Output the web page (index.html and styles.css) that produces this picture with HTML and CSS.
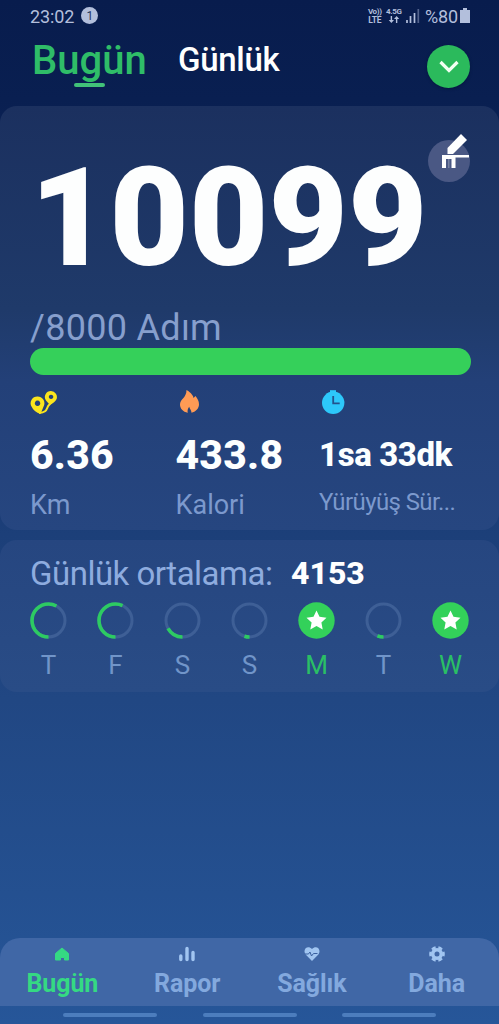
FILE: index.html
```html
<!DOCTYPE html>
<html lang="tr">
<head>
<meta charset="utf-8">
<title>Adım Sayar</title>
<link rel="stylesheet" href="styles.css">
</head>
<body>
<div class="screen">
  <div class="status">
    <span class="time">23:02</span><span class="badge">1</span>
    <span class="net volte"><span>Vo))</span><span class="lte">LTE</span></span>
    <span class="net data"><span>4.5G</span><svg width="12" height="7" viewBox="0 0 12 8"><path d="M2.200 0h1.600v4.500H6L3 8 0 4.500h2.200zM8.200 8h1.600V3.500H12L9 0 6 3.500h2.200z" fill="#b3bfdc"/></svg></span>
    <svg class="signal" width="14" height="14" viewBox="0 0 14 14"><path d="M1 11v3M4.500 7v7M8.500 4v10" stroke="#b3bfdc" stroke-width="1.700"/><path d="M12.300 0v14" stroke="#53638d" stroke-width="1.700"/></svg>
    <span class="battery-text">%80</span>
    <svg class="battery" width="10" height="15" viewBox="0 0 10 15"><path d="M3 0h4v2h3v13H0V2h3z" fill="#b3bfdc"/></svg>
  </div>
  <header class="tabs">
    <span class="tab tab-active">Bugün</span>
    <span class="tab tab-idle">Günlük</span>
    <span class="drop"><svg width="20" height="14" viewBox="0 0 20 14"><path d="M1.500 2l8.500 8.500L18.500 2" fill="none" stroke="#f2fff2" stroke-width="3.200"/></svg></span>
  </header>

  <section class="card summary">
    <div class="steps">10099</div>
    <svg class="pencil" width="44" height="50" viewBox="0 0 44 50"><circle cx="22" cy="29" r="21" fill="#4a5884"/><path d="M34 2l6 6L26 22h-5.500v-6z" fill="#fff"/><path d="M15 23h27v2.500H28.500V36h-4V27H19v9h-4z" fill="#fff"/><path d="M21 27h1.500v9H21z" fill="#fff" opacity=".25"/></svg>
    <div class="goal">/8000 Adım</div>
    <div class="progress"></div>
    <div class="stats">
      <div class="stat">
        <svg width="28" height="25" viewBox="0 0 28 25"><path d="M9 23c9-.5 7-5 10-8l3-3" fill="none" stroke="#fbe51d" stroke-width="2"/><path fill-rule="evenodd" d="M7.500 6.500a6.700 6.700 0 0 1 6.300 9.500L10.500 24Q4 22 1.500 16.500A6.700 6.700 0 0 1 7.500 6.500zm0 4.100a2.700 2.700 0 1 0 .1 0zM21 1a6 6 0 0 1 5.500 8.200Q24.500 13 19.500 14.500l-3.500-4A6 6 0 0 1 21 1zm0 3.700a2.200 2.200 0 1 0 .1 0z" fill="#fbe51d"/></svg>
        <b class="value">6.36</b><span class="label">Km</span>
      </div>
      <div class="stat">
        <svg width="28" height="25" viewBox="0 0 28 25"><path d="M10.500 0c5 3 7 6 7 8l2-2c2 3 3.500 5 3.500 8.500 0 4-3.500 7.500-7.500 8.200 0-2.500-2-4-2.300-6-1.500 1.800-2 4-1.400 6C7 22 4 18.500 4 14.500 4 9 10.500 8 10.500 0z" fill="#ff9b55"/></svg>
        <b class="value value-cal">433.8</b><span class="label label-cal">Kalori</span>
      </div>
      <div class="stat">
        <svg width="28" height="25" viewBox="0 0 28 25"><path d="M11 .2h6v3h-6z" fill="#2dc8fa"/><circle cx="14.200" cy="12.800" r="11.200" fill="#2dc8fa"/><path d="M14.200 6v7.300h6.500" fill="none" stroke="#23538c" stroke-width="1.800"/></svg>
        <b class="value value-time">1sa 33dk</b><span class="label label-time">Yürüyüş Sür...</span>
      </div>
    </div>
  </section>

  <section class="card week">
    <div class="average"><span class="avg-label">Günlük ortalama:</span><b class="avg-value">4153</b></div>
    <div class="days">
      <div class="day"><svg class="ring" viewBox="0 0 37 37"><circle class="track" cx="18.500" cy="18.500" r="16.500"/><circle class="arc" pathLength="100" stroke-dasharray="58 100" cx="18.500" cy="18.500" r="16.500"/></svg><span>T</span></div>
      <div class="day"><svg class="ring" viewBox="0 0 37 37"><circle class="track" cx="18.500" cy="18.500" r="16.500"/><circle class="arc" pathLength="100" stroke-dasharray="57 100" cx="18.500" cy="18.500" r="16.500"/></svg><span>F</span></div>
      <div class="day"><svg class="ring" viewBox="0 0 37 37"><circle class="track" cx="18.500" cy="18.500" r="16.500"/><circle class="arc" pathLength="100" stroke-dasharray="17 100" cx="18.500" cy="18.500" r="16.500"/></svg><span>S</span></div>
      <div class="day"><svg class="ring" viewBox="0 0 37 37"><circle class="track" cx="18.500" cy="18.500" r="16.500"/><circle class="arc" pathLength="100" stroke-dasharray="5 100" cx="18.500" cy="18.500" r="16.500"/></svg><span>S</span></div>
      <div class="day done"><svg class="ring" viewBox="0 0 37 37"><circle cx="18.500" cy="18.500" r="18.200" fill="#33d15a"/><path d="M18.500 8.500l3 6.300 7 .9-5.100 4.800 1.300 7-6.200-3.400-6.200 3.400 1.300-7-5.100-4.800 7-.9z" fill="#fff"/></svg><span>M</span></div>
      <div class="day"><svg class="ring" viewBox="0 0 37 37"><circle class="track" cx="18.500" cy="18.500" r="16.500"/><circle class="arc" pathLength="100" stroke-dasharray="8 100" stroke-dashoffset="2" cx="18.500" cy="18.500" r="16.500"/></svg><span>T</span></div>
      <div class="day done"><svg class="ring" viewBox="0 0 37 37"><circle cx="18.500" cy="18.500" r="18.200" fill="#33d15a"/><path d="M18.500 8.500l3 6.300 7 .9-5.100 4.800 1.300 7-6.200-3.400-6.200 3.400 1.300-7-5.100-4.800 7-.9z" fill="#fff"/></svg><span>W</span></div>
    </div>
  </section>

  <nav class="nav">
    <div class="item item-active"><svg width="16" height="16" viewBox="0 0 16 16"><path d="M8 2L14.500 7.500V14h-4v-2.500h-4V14h-5V7.500z" fill="currentColor" stroke="currentColor" stroke-width="1" stroke-linejoin="round"/></svg><span>Bugün</span></div>
    <div class="item"><svg width="16" height="16" viewBox="0 0 16 16"><path d="M1.800 10v3.500M8 2.500v11M14 6.500v7" stroke="currentColor" stroke-width="3.400" stroke-linecap="round"/></svg><span>Rapor</span></div>
    <div class="item"><svg width="16" height="16" viewBox="0 0 16 16"><path d="M8 15L1.600 8.500C-2 3 4-1.500 8 3c4-4.500 10 0 6.400 5.500z" fill="currentColor"/><path d="M1 8h3.500l1.500-2 1.500 4L9.500 7.500h4" fill="none" stroke="#3a60a0" stroke-width="1"/></svg><span>Sağlık</span></div>
    <div class="item"><svg width="16" height="16" viewBox="0 0 16 16"><g fill="none" stroke="currentColor"><circle cx="8" cy="8" r="4.300" stroke-width="3.600"/><circle cx="8" cy="8" r="6.600" stroke-width="2.400" pathLength="60" stroke-dasharray="6 4" stroke-dashoffset="3"/></g></svg><span>Daha</span></div>
  </nav>
  <div class="gestures"><i></i><i></i><i></i></div>
</div>
</body>
</html>
```
FILE: styles.css
```css
* { box-sizing: border-box; }
body { margin: 0; font-family: Roboto, "Noto Sans", sans-serif; }
svg { display: block; flex: none; }
.screen {
  width: 499px; height: 1024px; overflow: hidden;
  display: flex; flex-direction: column;
  background: linear-gradient(#081c4d 0, #091f51 100px, #1c3f79 535px, #214783 700px, #265699 1024px);
}
.status { height: 32px; padding: 0 29px 0 30px; display: flex; align-items: center; color: #b3bfdc; white-space: nowrap; }
.time { font-size: 18px; letter-spacing: -.1px; }
.badge { width: 17px; height: 17px; margin-left: 7px; margin-top: -2px; border-radius: 50%; background: #b3bfdc; color: #24365f; font-size: 12px; line-height: 18px; text-align: center; }
.net { display: flex; flex-direction: column; align-items: center; height: 16px; margin-top: -1px; font-size: 8px; font-weight: 700; line-height: 8px; letter-spacing: -.3px; }
.volte { margin-left: auto; width: 16px; }
.lte { font-size: 8.500px; letter-spacing: -.2px; }
.data { width: 16px; margin-left: 3px; }
.signal { margin-left: 4px; }
.battery-text { margin-left: 5px; font-size: 18px; letter-spacing: -.1px; }
.battery { margin: 0 0 1px 2px; }
.tabs { height: 74px; display: flex; padding: 0 29px 0 32px; }
.tab { white-space: nowrap; font-weight: 500; }
.tab-active { width: 146px; height: 56px; color: #2fbd68; font-size: 40px; line-height: 57px; }
.tab-active::after { content: ""; display: block; width: 31px; height: 4px; margin: -6px 0 0 42px; border-radius: 2px; background: #41c279; }
.tab-idle { color: #fff; font-size: 33px; line-height: 56px; letter-spacing: -.3px; }
.drop { width: 43px; height: 43px; margin: 13px 0 0 auto; border-radius: 50%; background: #2bba5c; display: flex; align-items: center; justify-content: center; box-shadow: 0 1px 3px #04123599; }
.card { flex: none; border-radius: 17px; }
.summary { height: 424px; padding: 0 28px 0 30px; position: relative; background: linear-gradient(#1b305f, #1f3a6a 48%, #234078 65%, #264680); }
.steps { height: 200px; color: #fdfefe; font-size: 137px; font-weight: 900; line-height: 224px; letter-spacing: .1px; }
.pencil { position: absolute; left: 427px; top: 26px; }
.goal { height: 34px; color: #879fcd; font-size: 36px; line-height: 45px; letter-spacing: .3px; white-space: nowrap; }
.progress { height: 27px; margin-top: 8px; border-radius: 14px; background: #35d05a; position: relative; }
.stats { display: grid; grid-template-columns: 145.500px 143.500px 1fr; padding-top: 15px; }
.stat { display: flex; flex-direction: column; white-space: nowrap; }
.value { height: 50px; margin-top: 14px; color: #fcffff; font-size: 41px; font-weight: 800; line-height: 52px; letter-spacing: .2px; }
.value-time { font-size: 33px; letter-spacing: -.4px; }
.label { color: #7c99cd; font-size: 27px; line-height: 53px; }
.label-time { font-size: 24px; line-height: 46px; letter-spacing: -.6px; }
.week { height: 152px; margin-top: 10px; padding: 11px 15px 0; background: linear-gradient(#264680, #294c86); }
.average { height: 44px; padding-left: 15px; display: flex; line-height: 45px; white-space: nowrap; }
.avg-label { width: 261px; color: #8eacdf; font-size: 33px; letter-spacing: -.5px; }
.avg-value { color: #fff; font-size: 32px; font-weight: 800; }
.days { display: grid; grid-template-columns: repeat(7, 67px); margin-top: 7px; }
.day { display: flex; flex-direction: column; align-items: center; color: #7195c9; font-size: 26px; line-height: 52px; }
.ring { width: 37px; height: 37px; }
.track { fill: none; stroke: #3e5f96; stroke-width: 3; }
.arc { fill: none; stroke: #2dcb62; stroke-width: 3.6; transform: rotate(90deg); transform-origin: center; }
.done { color: #2abf65; }
.nav { height: 68px; margin-top: auto; padding-top: 8px; display: grid; grid-template-columns: repeat(4, 1fr); border-radius: 20px 20px 0 0; background: #4067a6; flex: none; }
.item { display: flex; flex-direction: column; align-items: center; color: #83a9de; font-size: 25px; font-weight: 700; line-height: 43px; letter-spacing: -.1px; }
.item svg { color: #a1c5f1; }
.item-active, .item-active svg { color: #35d983; }
.gestures { height: 18px; flex: none; display: flex; gap: 45.500px; padding: 7px 0 0 63px; }
.gestures i { width: 94px; height: 4px; border-radius: 2px; background: #4c7dbd; }
```
